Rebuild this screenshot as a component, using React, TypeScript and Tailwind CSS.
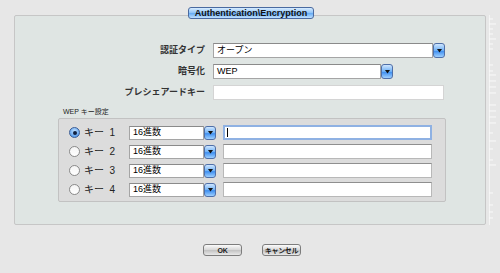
import React from "react";

const font = "font-['Liberation_Sans','Noto_Sans_CJK_JP',sans-serif]";

const Arrow = ({ h = 15 }: { h?: number }) => (
  <div
    className="flex w-[12px] shrink-0 items-center justify-center rounded-[3px] border border-[#4f6fa8] bg-[linear-gradient(#cfe6ff,#6eb0f5_50%,#3f8ff0_55%,#9fd0ff)]"
    style={{ height: h }}
  >
    <svg width="5" height="4" viewBox="0 0 5 4">
      <path d="M0 0h5L2.5 3.5z" fill="#111" />
    </svg>
  </div>
);

const Select = ({ value, w, h = 15 }: { value: string; w: number; h?: number }) => (
  <div className="flex items-stretch" style={{ width: w }}>
    <div className="flex flex-1 items-center border border-[#a5a5a5] border-t-[#8a8a8a] bg-white pl-[3px] text-[9px] leading-none text-black">
      {value}
    </div>
    <Arrow h={h} />
  </div>
);

const TextBox = ({ w, focus = false }: { w: number; focus?: boolean }) => (
  <div
    className={
      focus
        ? "flex h-[15px] items-center border-2 border-[#8fb1e3] bg-white pl-[2px]"
        : "h-[15px] border border-[#b8b8b8] border-t-[#8f8f8f] bg-white"
    }
    style={{ width: w }}
  >
    {focus && <div className="h-[9px] w-px bg-black" />}
  </div>
);

const Radio = ({ on }: { on?: boolean }) =>
  on ? (
    <div className="flex h-[11px] w-[11px] items-center justify-center rounded-full border border-[#3c5e96] bg-[radial-gradient(circle_at_50%_35%,#bfe0ff,#3d8be8)]">
      <div className="h-[4px] w-[4px] rounded-full bg-[#102040]" />
    </div>
  ) : (
    <div className="h-[11px] w-[11px] rounded-full border border-[#8a8a8a] bg-[linear-gradient(#f4f4f4,#ffffff)]" />
  );

const Button = ({ label, w }: { label: string; w: number }) => (
  <div
    className="flex h-[12px] items-center justify-center whitespace-nowrap rounded-[3px] border border-[#7d7d7d] bg-[linear-gradient(#fbfbfb,#d6d6d6_50%,#c4c4c4_55%,#e9e9e9)] text-[7px] font-bold leading-none tracking-[-0.3px] text-[#222]"
    style={{ width: w }}
  >
    {label}
  </div>
);

const FormRow = ({ label, children }: { label: string; children: React.ReactNode }) => (
  <div className="flex h-[15px] items-center">
    <div className="w-[192px] pr-[8px] text-right text-[9px] font-bold text-[#333]">{label}</div>
    {children}
  </div>
);

export default function App() {
  const keys = [1, 2, 3, 4];
  return (
    <div className={`relative h-[273px] w-[500px] overflow-hidden bg-[#e7e7e7] ${font}`}>
      <div className="pl-[14px] pt-[15px]">
        <div className="relative h-[210px] w-[472px] rounded-[2px] border border-[#c6c6c6] bg-[#dfe5e3] pl-[6px] pt-[27px]">
          <div className="absolute left-[173px] top-[-9px] flex h-[12px] w-[126px] items-center justify-center rounded-[3px] border border-[#4a6aa0] bg-[linear-gradient(#d8ecff,#8cc2f8_50%,#6aaef5_55%,#bfe0ff)] text-[9px] font-bold leading-none text-[#111]">
            Authentication\Encryption
          </div>

          <div className="flex flex-col gap-[6px]">
            <FormRow label="認証タイプ">
              <Select value="オープン" w={232} />
            </FormRow>
            <FormRow label="暗号化">
              <Select value="WEP" w={180} />
            </FormRow>
            <FormRow label="プレシェアードキー">
              <div className="h-[15px] w-[231px] border border-[#d4d4d4] bg-white" />
            </FormRow>
          </div>

          <div className="pl-[42px] pt-[8px] text-[7px] leading-none text-[#222]">WEP キー設定</div>

          <div className="ml-[37px] mt-[3px] flex h-[84px] w-[388px] flex-col rounded-[2px] border border-[#c2c2c2] bg-[#dcdcdc] pl-[10px] pt-[4px]">
            {keys.map((k) => (
              <div key={k} className="flex h-[19px] items-center">
                <Radio on={k === 1} />
                <div className="w-[49px] pl-[4px] text-[10px] text-[#222]">
                  キー&nbsp;&nbsp;{k}
                </div>
                <Select value="16進数" w={87} h={14} />
                <div className="w-[7px]" />
                <TextBox w={209} focus={k === 1} />
              </div>
            ))}
          </div>
        </div>
      </div>

      <div className="flex justify-center gap-[20px] pl-[4px] pt-[19px]">
        <Button label="OK" w={39} />
        <Button label="キャンセル" w={39} />
      </div>

      <svg className="absolute left-[486px] top-[15px]" width="14" height="210" viewBox="0 0 14 210">
        <line x1="3.5" y1="0" x2="3.5" y2="210" stroke="#f4f4f4" />
        {[4, 9, 14, 19, 24, 29, 34, 50, 56, 60, 66, 72, 78, 90, 96, 102, 108, 118, 126, 134, 145, 150, 178, 190, 197, 203].map((y) => (
          <line key={y} x1="3" y1={y} x2={y % 3 === 0 ? 10 : 7} y2={y} stroke="#fafafa" />
        ))}
      </svg>
    </div>
  );
}
